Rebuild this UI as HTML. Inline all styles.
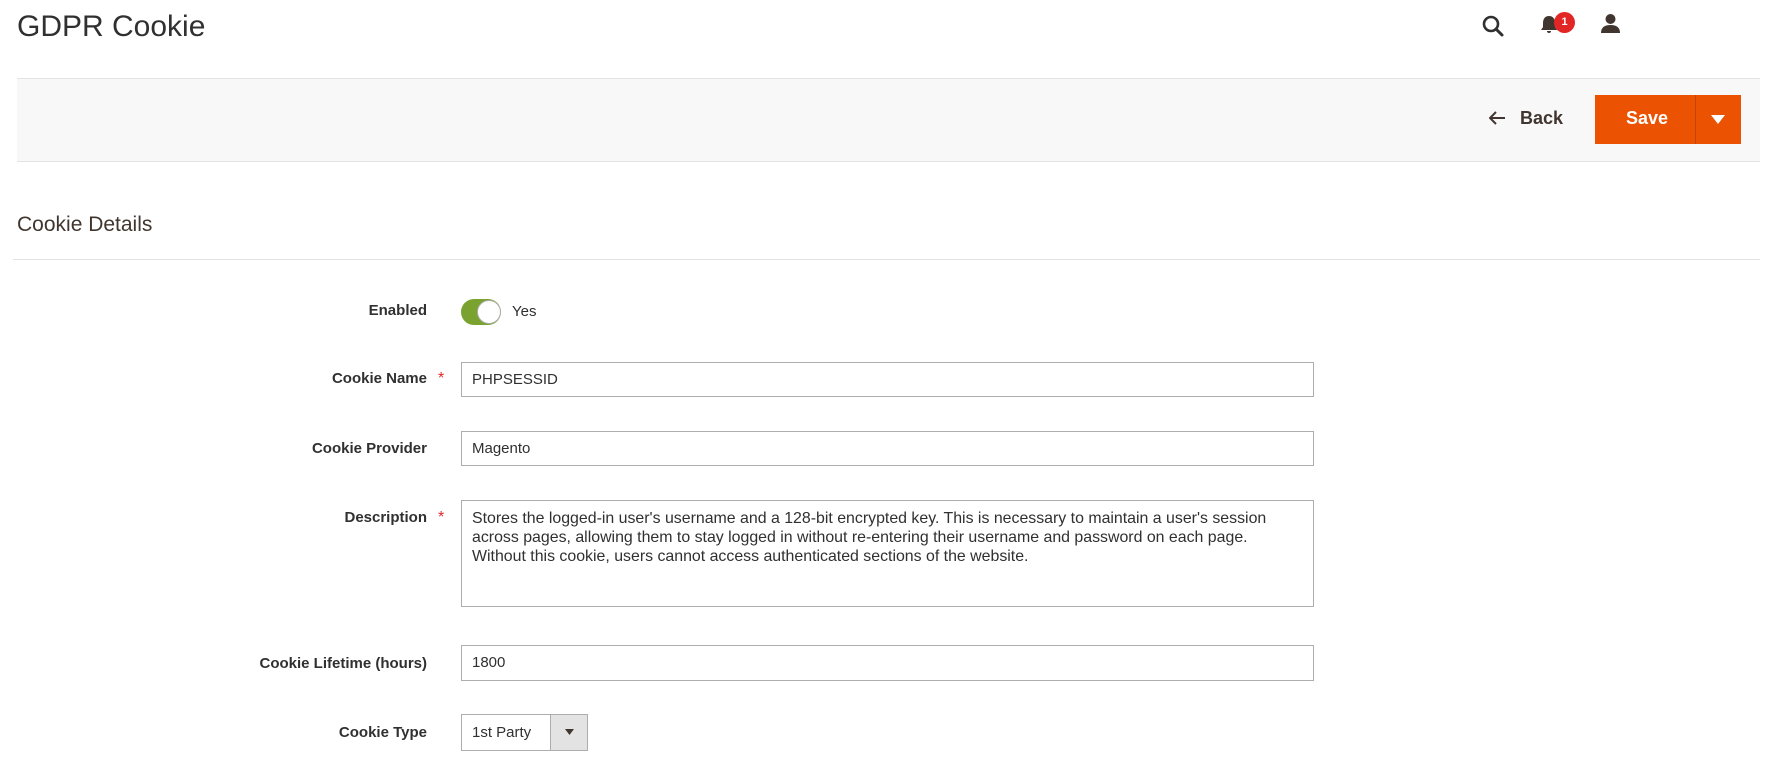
<!DOCTYPE html>
<html><head><meta charset="utf-8"><style>
*{box-sizing:border-box;margin:0;padding:0}
body{width:1768px;height:767px;background:#fff;font-family:"Liberation Sans",sans-serif;color:#303030;position:relative;overflow:hidden}
.abs{position:absolute}
.title{left:17px;top:10px;font-size:30px;color:#303030}
.topline{left:17px;top:78px;width:1743px;height:1px;background:#e3e3e3}
.bar{left:17px;top:79px;width:1743px;height:83px;background:#f8f8f8;border-bottom:1px solid #e3e3e3}
.save{left:1595px;top:95px;width:146px;height:49px;background:#eb5202;color:#fff;font-size:18px;font-weight:bold}
.save span{position:absolute;left:31px;top:13px}
.save i{position:absolute;left:100px;top:0;width:1px;height:49px;background:#c44503}
.back{left:1520px;top:108px;font-size:18px;font-weight:bold;color:#41362f}
.sec{left:17px;top:213px;font-size:21px;color:#41362f}
.secline{left:13px;top:259px;width:1747px;height:1px;background:#e3e3e3}
.lbl{width:400px;left:27px;text-align:right;font-size:15px;font-weight:bold;color:#303030}
.star{left:438px;color:#e22626;font-size:16px}
.inp{left:461px;width:853px;height:35px;border:1px solid #adadad;font-size:15px;padding:8px 10px;color:#303030}
</style></head><body>
<div class="abs title">GDPR Cookie</div>
<svg class="abs" style="left:1481px;top:14px" width="24" height="24" viewBox="0 0 24 24"><circle cx="10" cy="10" r="7" fill="none" stroke="#303030" stroke-width="2.6"/><path d="M15 15l6 6" stroke="#303030" stroke-width="3" stroke-linecap="round"/></svg>
<svg class="abs" style="left:1540px;top:15px" width="18" height="20" viewBox="0 0 18 20"><path d="M9 1c-4 0-6 3-6 7v4l-2 3h16l-2-3V8c0-4-2-7-6-7z M7 16h4a2 2 0 0 1-4 0z" fill="#41362f"/></svg>
<div class="abs" style="left:1554px;top:12px;width:21px;height:21px;border-radius:50%;background:#e22626;color:#fff;font-size:11px;font-weight:bold;text-align:center;line-height:21px">1</div>
<svg class="abs" style="left:1600px;top:13px" width="21" height="21" viewBox="0 0 21 21"><circle cx="10.5" cy="6" r="5" fill="#41362f"/><path d="M1 20c0-6 4-8 9.5-8s9.5 2 9.5 8z" fill="#41362f"/></svg>
<div class="abs topline"></div>
<div class="abs bar"></div>
<svg class="abs" style="left:1489px;top:111px" width="17" height="14" viewBox="0 0 17 14"><path d="M16 7H2M7 1L1 7l6 6" fill="none" stroke="#41362f" stroke-width="2"/></svg>
<div class="abs back">Back</div>
<div class="abs save"><span>Save</span><i></i><svg style="position:absolute;left:116px;top:20px" width="14" height="9" viewBox="0 0 14 9"><path d="M0 0h14L7 9z" fill="#fff"/></svg></div>
<div class="abs sec">Cookie Details</div>
<div class="abs secline"></div>

<div class="abs lbl" style="top:302px">Enabled</div>
<div class="abs" style="left:461px;top:299px;width:40px;height:26px;border-radius:13px;background:#79a22e"></div>
<div class="abs" style="left:477px;top:300px;width:24px;height:24px;border-radius:50%;background:#fff;border:1px solid #adadad"></div>
<div class="abs" style="left:512px;top:303px;font-size:15px">Yes</div>

<div class="abs lbl" style="top:370px">Cookie Name</div><div class="abs star" style="top:370px">*</div>
<div class="abs inp" style="top:362px">PHPSESSID</div>

<div class="abs lbl" style="top:440px">Cookie Provider</div>
<div class="abs inp" style="top:431px">Magento</div>

<div class="abs lbl" style="top:509px">Description</div><div class="abs star" style="top:509px">*</div>
<div class="abs inp" style="top:500px;height:107px;line-height:19px;padding:8px 10px;font-size:15.9px;white-space:nowrap">Stores the logged-in user's username and a 128-bit encrypted key. This is necessary to maintain a user's session<br>across pages, allowing them to stay logged in without re-entering their username and password on each page.<br>Without this cookie, users cannot access authenticated sections of the website.</div>

<div class="abs lbl" style="top:655px">Cookie Lifetime (hours)</div>
<div class="abs inp" style="top:645px;height:36px">1800</div>

<div class="abs lbl" style="top:724px">Cookie Type</div>
<div class="abs" style="left:461px;top:714px;width:127px;height:37px;border:1px solid #adadad;font-size:15px;padding:9px 10px">1st Party</div>
<div class="abs" style="left:550px;top:715px;width:37px;height:35px;background:#e3e3e3;border-left:1px solid #adadad"></div>
<svg class="abs" style="left:565px;top:729px" width="9" height="6" viewBox="0 0 9 6"><path d="M0 0h9L4.5 6z" fill="#41362f"/></svg>
</body></html>
